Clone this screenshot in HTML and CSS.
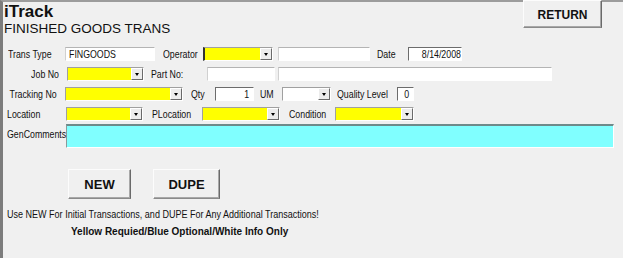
FILE: index.html
```html
<!DOCTYPE html>
<html lang="en">
<head>
  <meta charset="UTF-8" />
  <title>iTrack - Finished Goods Trans</title>
  <link rel="stylesheet" href="styles.css">
</head>
<body>
  <div class="screen">
    <button class="btn btn-return">RETURN</button>
    <div class="app-name">iTrack</div>
    <div class="form-title">FINISHED GOODS TRANS</div>

    <div class="row row-first">
      <span class="lbl w57">Trans Type</span>
      <span class="box w90"><span class="val">FINGOODS</span></span>
      <span class="lbl m8 w40">Operator</span>
      <span class="combo req w70 caret"><i class="drop"></i></span>
      <span class="box m5 w92"></span>
      <span class="lbl m7 w31">Date</span>
      <span class="box sunken right w54"><span class="val">8/14/2008</span></span>
    </div>

    <div class="row">
      <span class="lbl lbl-right w59">Job No</span>
      <span class="combo req w77"><i class="drop"></i></span>
      <span class="lbl m7 w56">Part No:</span>
      <span class="box w68"></span>
      <span class="box m3 w274"></span>
    </div>

    <div class="row">
      <span class="lbl pl2 w57">Tracking No</span>
      <span class="combo req w118"><i class="drop"></i></span>
      <span class="lbl m8 w24">Qty</span>
      <span class="box sunken right w39"><span class="val">1</span></span>
      <span class="lbl m6 w22">UM</span>
      <span class="combo w49"><i class="drop"></i></span>
      <span class="lbl m6 w60">Quality Level</span>
      <span class="box sunken right w17"><span class="val">0</span></span>
    </div>

    <div class="row">
      <span class="lbl pl0 w59">Location</span>
      <span class="combo req w77"><i class="drop"></i></span>
      <span class="lbl m9 w50">PLocation</span>
      <span class="combo req w78"><i class="drop"></i></span>
      <span class="lbl m9 w46">Condition</span>
      <span class="combo req w79"><i class="drop"></i></span>
    </div>

    <div class="row row-comments">
      <span class="lbl pl0 w59">GenComments</span>
      <span class="memo"></span>
    </div>

    <div class="actions">
      <button class="btn btn-new">NEW</button>
      <button class="btn btn-dupe">DUPE</button>
    </div>

    <p class="hint">Use NEW For Initial Transactions, and DUPE For Any Additional Transactions!</p>
    <p class="legend">Yellow Requied/Blue Optional/White Info Only</p>
  </div>
</body>
</html>
```

FILE: styles.css
```css
body {
  margin: 0;
  background: #f0f0f0;
  font-family: "Liberation Sans", Arial, sans-serif;
  color: #111;
}
.screen {
  position: relative;
  height: 256px;
  border-top: 2px solid #9c9c9c;
  border-left: 3px solid #7c7c7c;
  background: #f0f0f0;
}
.app-name {
  padding: 1px 0 0 1px;
  font-size: 17px;
  font-weight: bold;
  line-height: 18px;
}
.form-title {
  padding-left: 1px;
  font-size: 13.5px;
  line-height: 16px;
}

/* buttons */
.btn {
  font-family: "Liberation Sans", Arial, sans-serif;
  font-weight: bold;
  background: #f0f0f0;
  color: #111;
  border: 1px solid;
  border-color: #fcfcfc #6a6a6a #8a8a8a #fcfcfc;
  box-shadow: inset -1px -1px 0 #a8a8a8;
  padding: 0;
}
.btn-return {
  position: absolute;
  top: -2px;
  left: 520px;
  width: 79px;
  height: 28px;
  font-size: 12px;
  padding-top: 2px;
}
.btn-new, .btn-dupe {
  height: 30px;
  font-size: 13px;
}
.btn-new { width: 63px; }
.btn-dupe { width: 67px; margin-left: 22px; }

/* form rows - the old dialog font is narrow, so labels are squeezed */
.row {
  display: flex;
  align-items: flex-start;
  height: 14px;
  margin-top: 6px;
  padding-left: 5px;
}
.row-first { margin-top: 10px; }
.lbl {
  flex: none;
  font-size: 11px;
  line-height: 14px;
  white-space: nowrap;
  transform: scaleX(0.8);
  transform-origin: left center;
}
.lbl-right {
  text-align: right;
  padding-right: 10px;
  box-sizing: border-box;
  transform-origin: right center;
}
.pl2 { padding-left: 2px; box-sizing: border-box; }
.pl0 { margin-left: -1px; }

.box, .combo {
  flex: none;
  box-sizing: border-box;
  height: 14px;
  background: #fff;
  font-size: 11px;
  line-height: 12px;
  padding: 0 3px;
  border: 1px solid;
  border-color: #b4b4b4 #fff #fff #d0d0d0;
  white-space: nowrap;
}
.val {
  display: inline-block;
  transform: scaleX(0.8);
  transform-origin: left center;
}
.box.sunken {
  border-color: #6c6c6c #fff #fff #6c6c6c;
}
.box.right { text-align: right; padding-right: 4px; }
.box.right .val { transform-origin: right center; }

.combo {
  position: relative;
  border-color: #a0a0a0 #fff #fff #a0a0a0;
}
.combo.req { background: #ffff00; }
.combo.caret { border-left: 2px solid #333; }
.drop {
  position: absolute;
  top: 0;
  right: 0;
  width: 12px;
  height: 12px;
  box-sizing: border-box;
  background: #ececec;
  border: 1px solid;
  border-color: #fff #6a6a6a #6a6a6a #fff;
}
.drop::after {
  content: "";
  position: absolute;
  left: 3px;
  top: 4px;
  border-left: 2.5px solid transparent;
  border-right: 2.5px solid transparent;
  border-top: 3px solid #000;
}

.row-comments {
  height: 24px;
  margin-top: 3px;
}
.row-comments .lbl {
  padding-top: 3px;
}
.memo {
  flex: none;
  width: 548px;
  height: 24px;
  box-sizing: border-box;
  background: #80ffff;
  border-top: 2px solid #6e8a8a;
  border-left: 1px solid #8a9a9a;
  border-right: 1px solid #fff;
  border-bottom: 1px solid #fff;
}

.actions {
  display: flex;
  margin-top: 21px;
  padding-left: 65px;
}

.hint {
  margin: 9px 0 0 4px;
  font-size: 11px;
  line-height: 13px;
  white-space: nowrap;
  transform: scaleX(0.82);
  transform-origin: left center;
}
.legend {
  margin: 4px 0 0 68px;
  font-size: 10px;
  font-weight: bold;
  line-height: 13px;
}

/* widths and left gaps */
.w17 { width: 17px; }
.w22 { width: 22px; }
.w24 { width: 24px; }
.w31 { width: 31px; }
.w39 { width: 39px; }
.w40 { width: 40px; }
.w46 { width: 46px; }
.w49 { width: 49px; }
.w50 { width: 50px; }
.w54 { width: 54px; }
.w56 { width: 56px; }
.w57 { width: 57px; }
.w59 { width: 59px; }
.w60 { width: 60px; }
.w68 { width: 68px; }
.w70 { width: 70px; }
.w77 { width: 77px; }
.w78 { width: 78px; }
.w79 { width: 79px; }
.w90 { width: 90px; }
.w92 { width: 92px; }
.w118 { width: 118px; }
.w274 { width: 274px; }
.m3 { margin-left: 3px; }
.m5 { margin-left: 5px; }
.m6 { margin-left: 6px; }
.m7 { margin-left: 7px; }
.m8 { margin-left: 8px; }
.m9 { margin-left: 9px; }
```
